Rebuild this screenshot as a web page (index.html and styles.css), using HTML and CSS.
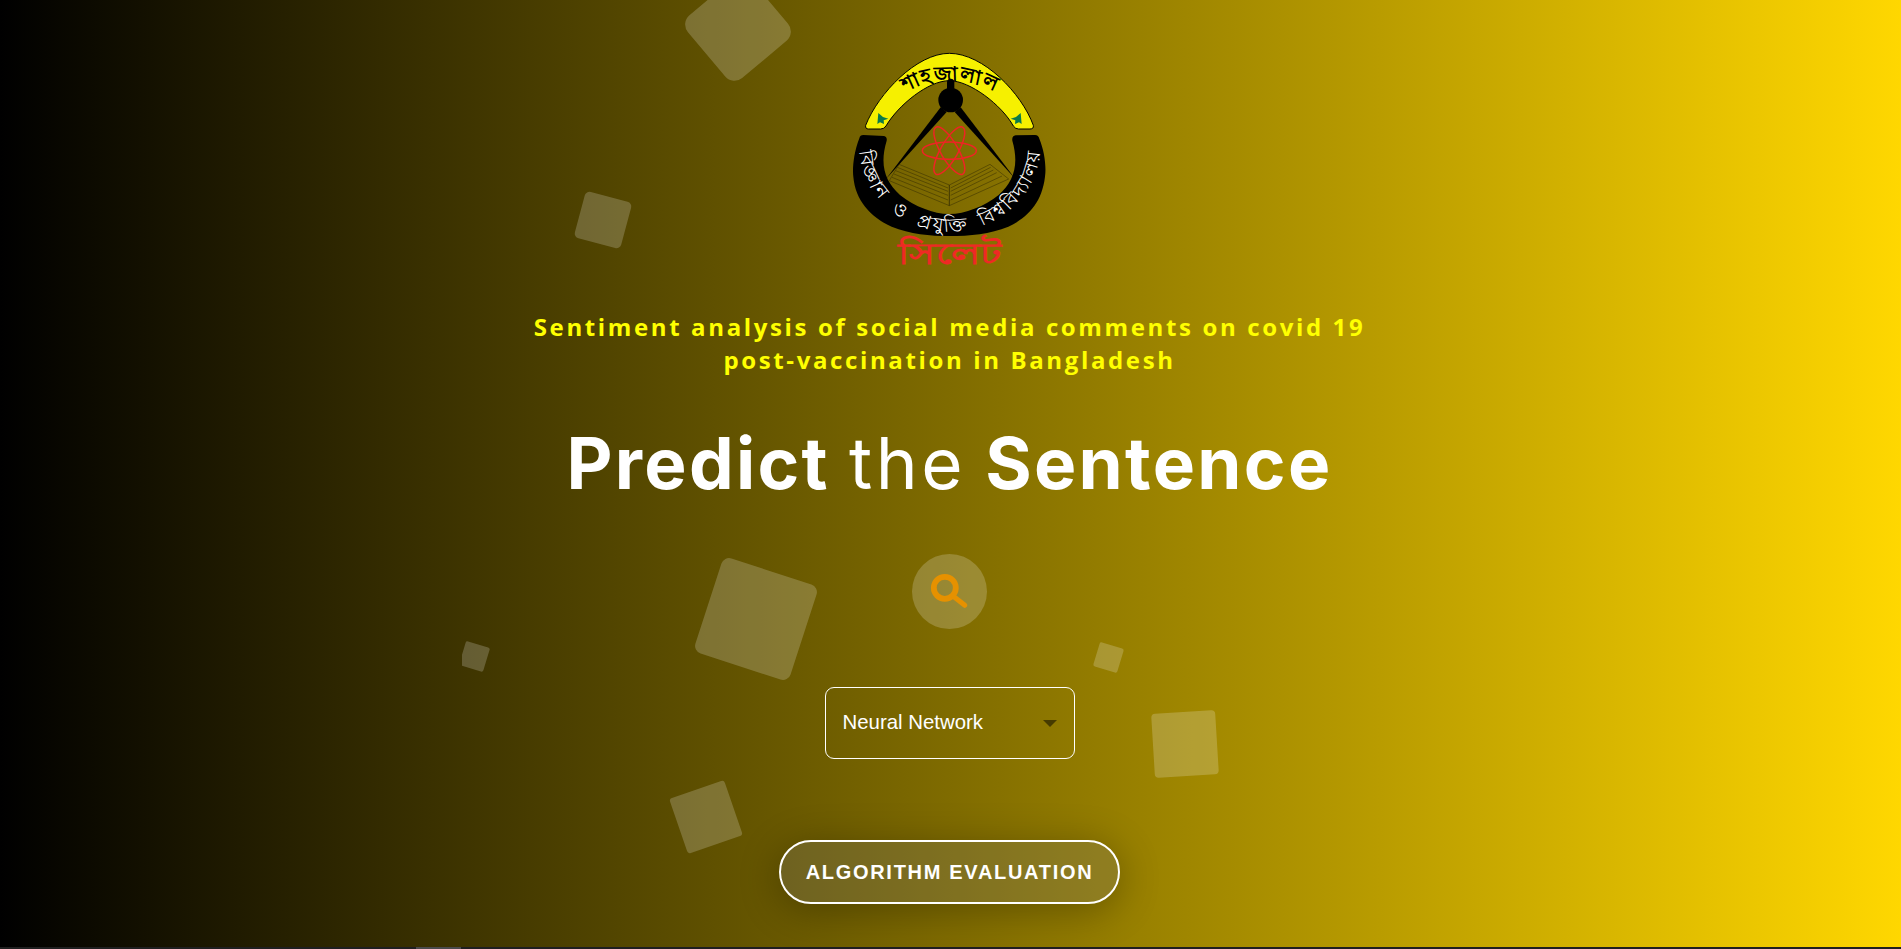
FILE: index.html
```html
<!DOCTYPE html>
<html lang="en">
<head>
<meta charset="utf-8">
<title>Predict the Sentence</title>
<link rel="stylesheet" href="styles.css">
</head>
<body>
<div class="page">
  <div class="shapes" aria-hidden="true">
    <span class="shape s1"></span><span class="shape s2"></span><span class="shape s3"></span>
    <span class="shape s4"></span><span class="shape s5"></span><span class="shape s6"></span><span class="shape s7"></span>
  </div>
  <main class="content">
    <svg class="logo" viewBox="0 0 780 750" role="img" aria-label="Shahjalal University of Science and Technology, Sylhet">
      <defs>
        <path id="archText" d="M190,240 C255,170 325,152 388,152 C451,152 525,170 590,240"/>
        <path id="bandText" d="M122,325 C100,470 230,604 388,604 C545,604 680,470 656,325"/>
      </defs>
      <path class="arch" d="M137,286 C175,190 290,70 388,70 C490,70 605,190 640,286 Q642,297 630,297 L596,297 Q586,297 580,288 C545,225 450,152 388,152 C325,152 235,225 198,288 Q192,297 182,297 L146,297 Q135,297 137,286Z"/>
      <text class="arch-label"><textPath href="#archText" startOffset="50%">শাহজালাল</textPath></text>
      <path class="leaf" d="M175,249 L189,261 L205,266 L191,271 L192,282 L180,277 L172,282 Z"/>
      <path class="leaf" d="M602,249 L588,261 L572,266 L586,271 L585,282 L597,277 L605,282 Z"/>
      <path class="band" d="M118,325 Q120,315 130,315 L192,318 Q202,320 200,332 C178,405 195,455 240,495 C285,530 340,552 388,552 C436,552 491,530 536,495 C581,455 598,405 577,332 Q575,318 587,316 L645,315 Q656,316 658,326 C672,360 678,400 676,430 C670,510 630,560 565,590 C510,612 450,618 388,618 C330,618 270,612 215,590 C150,560 106,510 100,440 C97,420 100,370 118,325Z"/>
      <text class="band-label"><textPath href="#bandText" startOffset="50%">বিজ্ঞান ও প্রযুক্তি বিশ্ববিদ্যালয়</textPath></text>
      <rect class="compass" x="381" y="146" width="22" height="60" rx="11"/>
      <circle class="compass" cx="392" cy="210" r="37"/>
      <path class="compass" d="M362,232 L198,447 L380,246 Z"/>
      <path class="compass" d="M422,232 L586,447 L404,246 Z"/>
      <g class="atom">
        <ellipse cx="388" cy="362" rx="81" ry="26"/>
        <ellipse cx="388" cy="362" rx="81" ry="26" transform="rotate(60 388 362)"/>
        <ellipse cx="388" cy="362" rx="81" ry="26" transform="rotate(-60 388 362)"/>
      </g>
      <g class="book">
        <path d="M237,403 L388,465 L388,527 L208,452 Z"/>
        <path d="M510,403 L388,465 L388,527 L566,447 Z"/>
        <path d="M232,412 L384,474 M227,422 L384,484 M222,432 L384,496 M216,442 L384,510"/>
        <path d="M512,412 L392,474 M520,420 L392,484 M530,428 L392,496 M546,438 L392,510"/>
      </g>
      <text class="city" x="388" y="702" textLength="310" lengthAdjust="spacingAndGlyphs">সিলেট</text>
    </svg>
    <h2 class="subtitle">Sentiment analysis of social media comments on covid 19<br>post-vaccination in Bangladesh</h2>
    <h1 class="title"><b>Predict</b> <span class="thin">the</span> <b>Sentence</b></h1>
    <button class="search" type="button" aria-label="Search">
      <svg viewBox="0 0 40 40" class="search-icon"><circle cx="14.800" cy="15.800" r="11"/><path class="handle" d="M23 24 L34.800 33.300"/></svg>
    </button>
    <div class="select-wrap">
      <select class="algo">
        <option>Neural Network</option>
      </select>
    </div>
    <a class="eval" href="#">ALGORITHM EVALUATION</a>
  </main>
  <div class="scrollbar"><span class="thumb"></span></div>
</div>
</body>
</html>
```

FILE: styles.css
```css
html, body {
  margin: 0;
  height: 100%;
  overflow: hidden;
}
.page {
  position: relative;
  height: 100vh;
  display: flex;
  flex-direction: column;
  background: linear-gradient(to right, #000, #ffd700);
}
.shapes {
  position: absolute;
  left: 462px;
  right: 462px;
  top: 0;
  bottom: 0;
  overflow: hidden;
}
.shape {
  position: absolute;
  display: block;
  background: rgba(255, 255, 255, 0.2);
}
.s1 { left: 235px; top: -13px; width: 82px; height: 82px; border-radius: 12px; transform: rotate(-40deg); }
.s2 { left: 117px; top: 196px; width: 48px; height: 48px; border-radius: 5px; transform: rotate(15deg); }
.s3 { left: 244px; top: 569px; width: 100px; height: 100px; border-radius: 8px; transform: rotate(18deg); }
.s4 { left: 0; top: 644px; width: 25px; height: 25px; border-radius: 2px; transform: rotate(17deg); }
.s5 { left: 634px; top: 645px; width: 25px; height: 25px; border-radius: 2px; transform: rotate(17deg); }
.s6 { left: 691px; top: 712px; width: 64px; height: 64px; border-radius: 4px; transform: rotate(-3.500deg); }
.s7 { left: 215px; top: 788px; width: 58px; height: 58px; border-radius: 3px; transform: rotate(-19deg); }
.content {
  position: relative;
  flex: 1;
  display: flex;
  flex-direction: column;
  align-items: center;
  padding: 30px 2px 0 0;
}
.logo {
  width: 260px;
  height: 250px;
  flex: none;
}
.arch { fill: #f6f000; stroke: #000; stroke-width: 3; }
.arch-label {
  font: 700 60px "Noto Sans", "DejaVu Sans", sans-serif;
  letter-spacing: 3px;
  fill: #000;
  text-anchor: middle;
}
.band { fill: #000; }
.band-label {
  font: 500 56px "Noto Sans", "DejaVu Sans", sans-serif;
  letter-spacing: 5px;
  word-spacing: 22px;
  fill: #fff;
  text-anchor: middle;
}
.leaf { fill: #0c7a4a; }
.compass { fill: #000; }
.atom ellipse { fill: none; stroke: #ee2424; stroke-width: 4.500; }
.book path { fill: none; stroke: #332a00; stroke-width: 1.500; }
.city {
  font: 700 90px "Noto Sans", "DejaVu Sans", sans-serif;
  fill: #ee2a24;
  text-anchor: middle;
}
.subtitle {
  margin: 30px 0 0;
  font: 700 24px/33px "Open Sans", sans-serif;
  letter-spacing: 2.630px;
  color: #ffff00;
  text-align: center;
}
.title {
  margin: 42px 0 0;
  font: 700 71px/90px Inter, sans-serif;
  letter-spacing: 2.300px;
  color: #fff;
  text-align: center;
}
.title b { font-weight: 700; }
.title .thin { font-weight: 400; letter-spacing: 3.500px; }
.search {
  margin-top: 46px;
  width: 75px;
  height: 75px;
  padding: 0;
  border: 0;
  border-radius: 50%;
  display: flex;
  align-items: center;
  justify-content: center;
  background: rgba(255, 255, 255, 0.2);
}
.search-icon {
  width: 40px;
  height: 40px;
  fill: none;
  stroke: #e69100;
  stroke-width: 5.800;
  stroke-linecap: round;
}
.search-icon .handle { stroke-width: 5; }
.select-wrap {
  position: relative;
  margin-top: 58px;
  width: 250px;
  height: 72px;
}
.select-wrap::after {
  content: "";
  position: absolute;
  left: 218px;
  top: 33px;
  border-left: 7px solid transparent;
  border-right: 7px solid transparent;
  border-top: 7px solid rgba(0, 0, 0, 0.5);
}
.algo {
  width: 100%;
  height: 100%;
  box-sizing: border-box;
  padding: 0 17px 2px;
  appearance: none;
  border: 1px solid #fff;
  border-radius: 9px;
  background: transparent;
  color: #fff;
  font: 400 20.400px "Liberation Sans", sans-serif;
  outline: none;
}
.eval {
  margin-top: 81px;
  width: 341px;
  height: 64px;
  box-sizing: border-box;
  display: flex;
  align-items: center;
  justify-content: center;
  border: 2px solid #fff;
  border-radius: 32px;
  background: rgba(128, 128, 128, 0.25);
  box-shadow: 0 6px 40px rgba(0, 0, 0, 0.3);
  color: #fff;
  font: 700 20px "Liberation Sans", sans-serif;
  letter-spacing: 1.700px;
  text-decoration: none;
}
.scrollbar {
  position: relative;
  height: 2px;
  flex: none;
  background: #1f1f1f;
}
.thumb {
  display: block;
  margin-left: 416px;
  width: 45px;
  height: 2px;
  background: #4a4a4a;
}
```
